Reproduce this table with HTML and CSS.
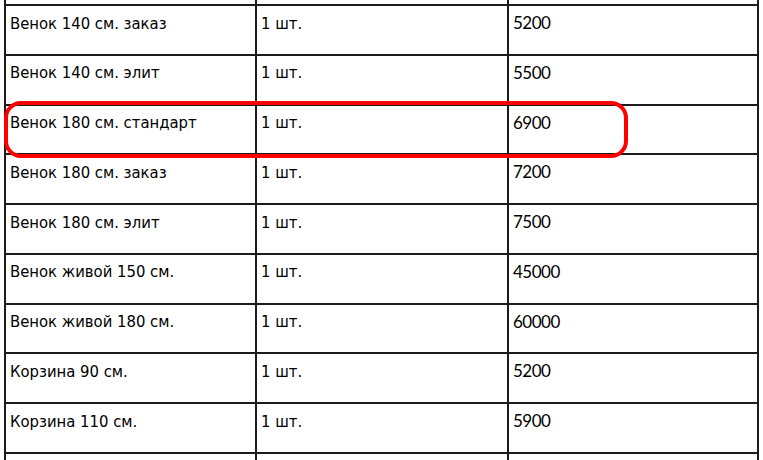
FILE: index.html
```html
<!DOCTYPE html>
<html lang="ru">
<head>
<meta charset="utf-8">
<title>Прайс</title>
<link rel="stylesheet" href="styles.css">
</head>
<body>
<div class="sheet">
  <table class="price">
    <colgroup>
      <col class="c-name"><col class="c-qty"><col class="c-price">
    </colgroup>
    <tbody>
      <tr class="edge"><td></td><td></td><td></td></tr>
      <tr><td>Венок 140 см. заказ</td><td>1 шт.</td><td class="num">5200</td></tr>
      <tr><td>Венок 140 см. элит</td><td>1 шт.</td><td class="num">5500</td></tr>
      <tr><td>Венок 180 см. стандарт</td><td>1 шт.</td><td class="num">6900</td></tr>
      <tr><td>Венок 180 см. заказ</td><td>1 шт.</td><td class="num">7200</td></tr>
      <tr><td>Венок 180 см. элит</td><td>1 шт.</td><td class="num">7500</td></tr>
      <tr><td>Венок живой 150 см.</td><td>1 шт.</td><td class="num">45000</td></tr>
      <tr><td>Венок живой 180 см.</td><td>1 шт.</td><td class="num">60000</td></tr>
      <tr><td>Корзина 90 см.</td><td>1 шт.</td><td class="num">5200</td></tr>
      <tr><td>Корзина 110 см.</td><td>1 шт.</td><td class="num">5900</td></tr>
      <tr class="edge"><td></td><td></td><td></td></tr>
    </tbody>
  </table>
  <div class="highlight"></div>
</div>
</body>
</html>
```

FILE: styles.css
```css
html, body {
  margin: 0;
  padding: 0;
  background: #fff;
  overflow: hidden;
  height: 460px;
}

.sheet {
  position: relative;
  padding-left: 4px;
  margin-top: -43.78px;
}

.price {
  table-layout: fixed;
  width: 755px;
  border-collapse: separate;
  border-spacing: 0;
  font-family: "DejaVu Sans Condensed", "DejaVu Sans", Tahoma, sans-serif;
  font-size: 16.5px;
  color: #000;
}

.c-name { width: 253px; }
.c-qty { width: 252px; }
.c-price { width: 250px; }

.price tr {
  height: 49.78px;
}

.price td {
  box-sizing: border-box;
  vertical-align: top;
  padding: 7.5px 4px 0 4px;
  line-height: 19px;
  border-right: 2px solid #1c1c1c;
  border-bottom: 2px solid #1c1c1c;
  white-space: nowrap;
}

.price td:first-child {
  border-left: 2px solid #1c1c1c;
}

.price td.num {
  font-family: "Lato", "Open Sans", sans-serif;
  font-size: 17px;
  letter-spacing: -0.5px;
  padding-top: 7px;
}

.highlight {
  position: absolute;
  left: 4px;
  top: 144.8px;
  width: 624px;
  height: 57px;
  box-sizing: border-box;
  border: 4px solid #ff0000;
  border-radius: 17px;
  pointer-events: none;
}
```
